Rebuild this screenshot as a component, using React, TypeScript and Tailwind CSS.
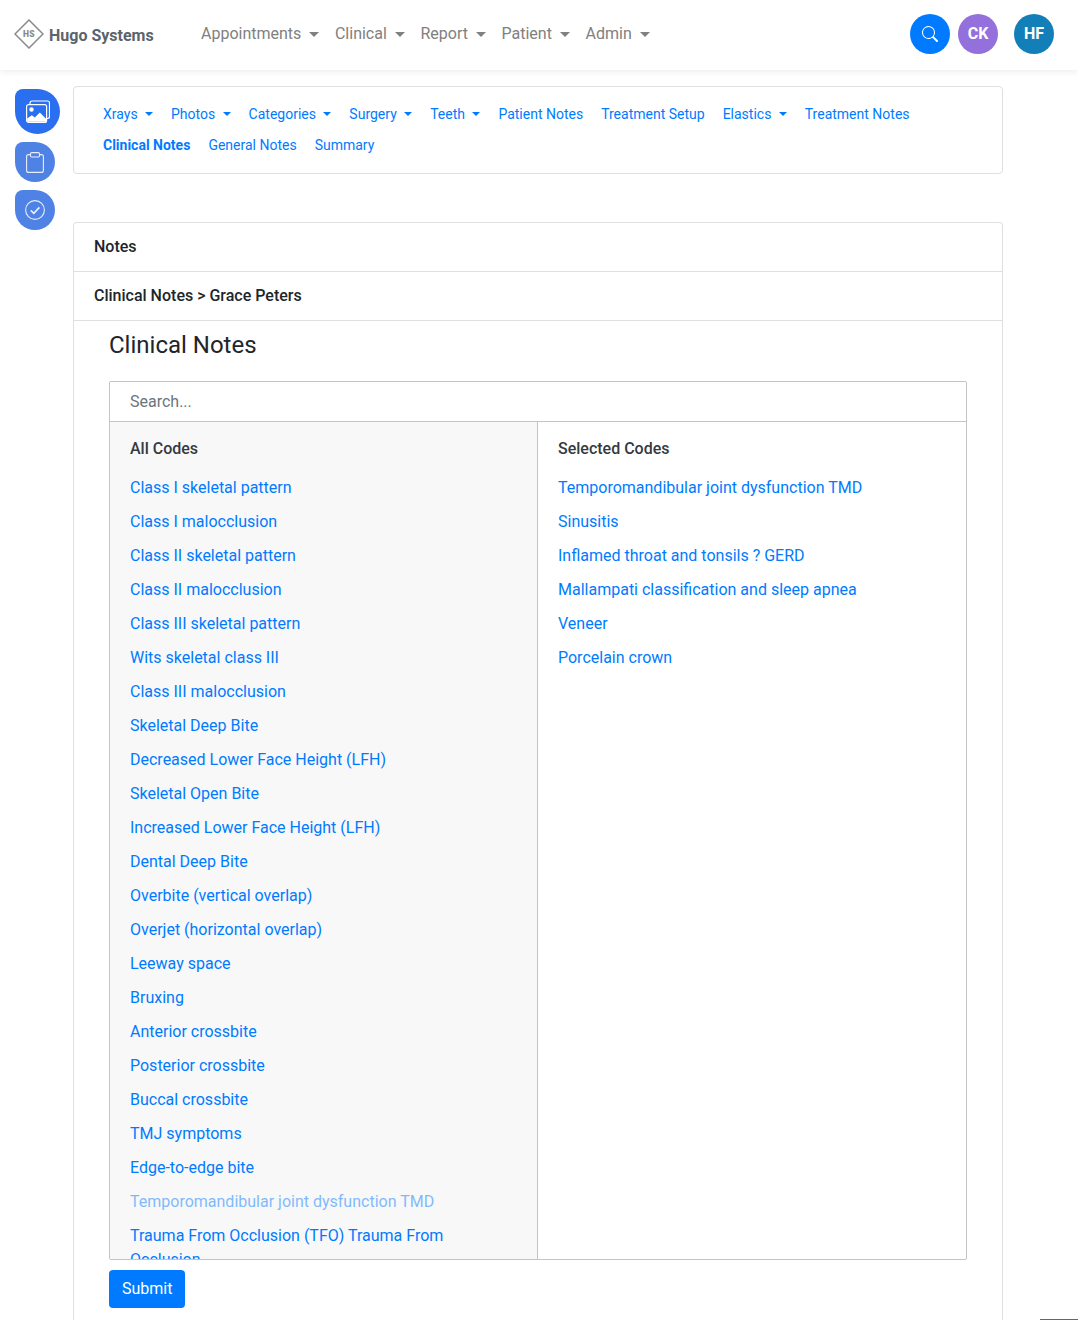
import { BsSearch } from "react-icons/bs";

const MENU = ["Appointments", "Clinical", "Report", "Patient", "Admin"];
const TABS_1 = [
  { label: "Xrays", caret: true },
  { label: "Photos", caret: true },
  { label: "Categories", caret: true },
  { label: "Surgery", caret: true },
  { label: "Teeth", caret: true },
  { label: "Patient Notes" },
  { label: "Treatment Setup" },
  { label: "Elastics", caret: true },
  { label: "Treatment Notes" },
];
const ALL_CODES = [
  "Class I skeletal pattern",
  "Class I malocclusion",
  "Class II skeletal pattern",
  "Class II malocclusion",
  "Class III skeletal pattern",
  "Wits skeletal class III",
  "Class III malocclusion",
  "Skeletal Deep Bite",
  "Decreased Lower Face Height (LFH)",
  "Skeletal Open Bite",
  "Increased Lower Face Height (LFH)",
  "Dental Deep Bite",
  "Overbite (vertical overlap)",
  "Overjet (horizontal overlap)",
  "Leeway space",
  "Bruxing",
  "Anterior crossbite",
  "Posterior crossbite",
  "Buccal crossbite",
  "TMJ symptoms",
  "Edge-to-edge bite",
];
const SELECTED = [
  "Temporomandibular joint dysfunction TMD",
  "Sinusitis",
  "Inflamed throat and tonsils ? GERD",
  "Mallampati classification and sleep apnea",
  "Veneer",
  "Porcelain crown",
];

function Logo() {
  return (
    <svg width="30" height="30" viewBox="0 0 30 30" className="shrink-0 -mt-[2px]">
      <path d="M15 1 29 15 15 29 1 15Z" fill="none" stroke="#8a8a8a" strokeWidth="1.5" />
      <text x="15" y="18" textAnchor="middle" fontSize="8.5" fontWeight="900" letterSpacing="0.4" fill="#8a8a8a" fontFamily="Roboto">HS</text>
    </svg>
  );
}

function PhotosIcon() {
  return (
    <svg width="24" height="23" viewBox="0 0 24 23" fill="none" stroke="white" strokeWidth="1.2">
      <rect x="0.6" y="4.6" width="20" height="17.8" rx="2" />
      <path d="M4 4.5V3a2 2 0 0 1 2-2h15.5a2 2 0 0 1 2 2v13.5a2 2 0 0 1-2 2h-1" />
      <circle cx="5.5" cy="9.5" r="2.2" fill="white" stroke="none" />
      <path d="M1.2 21.8v-3.3l4.6-3.2 3 2.2 5-5 6.2 6.3v3Z" fill="white" stroke="none" />
    </svg>
  );
}

function ClipboardIcon() {
  return (
    <svg width="18" height="21" viewBox="0 0 18 21" fill="none" stroke="#e8eefb" strokeWidth="1.1">
      <rect x="0.6" y="2.6" width="16.8" height="17.8" rx="2" />
      <rect x="4.5" y="0.6" width="9" height="4.4" rx="1.2" fill="#4e82e4" />
    </svg>
  );
}

function CheckIcon() {
  return (
    <svg width="20" height="20" viewBox="0 0 20 20" fill="none" stroke="#e8eefb">
      <circle cx="10" cy="10" r="9.4" strokeWidth="1.1" />
      <path d="M5.8 10.3l3 3 5.6-6" strokeWidth="1.7" />
    </svg>
  );
}

function Header() {
  return (
    <header className="h-[70px] flex items-center bg-white shadow-[0_2px_6px_rgba(0,0,0,0.07)] relative">
      <div className="flex items-center ml-[14px] w-[187px] gap-[5px]">
        <Logo />
        <span className="text-[16px] font-bold text-[#5c636b] mt-[2px]">Hugo Systems</span>
      </div>
      <nav className="flex items-center -mt-[2px]">
        {MENU.map((m) => (
          <span key={m} className="flex items-center gap-[8px] mr-[15.6px] text-[16px] text-[#808080]">
            {m}
            <span className="inline-block border-x-[5px] border-t-[5px] border-x-transparent border-t-[#808080]" />
          </span>
        ))}
      </nav>
      <div className="ml-auto flex items-center mr-[24px] -mt-[2px]">
        <span className="w-10 h-10 rounded-full bg-[#007bff] flex items-center justify-center text-white">
          <BsSearch size={16} />
        </span>
        <span className="w-10 h-10 ml-[8px] rounded-full bg-[#9370db] flex items-center justify-center text-white font-bold text-[16px]">CK</span>
        <span className="w-10 h-10 ml-[16px] rounded-full bg-[#137fb8] flex items-center justify-center text-white font-bold text-[16px]">HF</span>
      </div>
    </header>
  );
}

function Sidebar() {
  return (
    <aside className="w-[73px] pl-[15px] pt-[19px] flex flex-col items-start shrink-0">
      <span className="w-[45px] h-[45px] rounded-[50%] rounded-tl-[8px] bg-[#2a6fef] flex items-center justify-center">
        <PhotosIcon />
      </span>
      <span className="w-10 h-10 mt-2 rounded-[50%] rounded-tl-[8px] bg-[#4e82e4] flex items-center justify-center">
        <ClipboardIcon />
      </span>
      <span className="w-10 h-10 mt-2 rounded-[50%] rounded-tl-[8px] bg-[#4e82e4] flex items-center justify-center">
        <CheckIcon />
      </span>
    </aside>
  );
}

function Tabs() {
  return (
    <div className="mt-4 h-[88px] border border-[#dfdfdf] rounded-[4px] bg-white pl-[29px] pt-[12px] text-[14px] text-[#007bff]">
      <div className="flex items-center h-[31px]">
        {TABS_1.map((t) => (
          <span key={t.label} className="flex items-center gap-[7.4px] mr-[18px]">
            {t.label}
            {t.caret && <span className="inline-block border-x-[4px] border-t-[4px] border-x-transparent border-t-[#007bff] -mt-[2px]" />}
          </span>
        ))}
      </div>
      <div className="flex items-center h-[31px]">
        <span className="font-bold mr-[18px]">Clinical Notes</span>
        <span className="mr-[18px]">General Notes</span>
        <span>Summary</span>
      </div>
    </div>
  );
}

function CodeLink({ label, faded }: { label: string; faded?: boolean }) {
  return <div className={`h-[34px] leading-[24px] ${faded ? "text-[#007bff]/50" : "text-[#007bff]"}`}>{label}</div>;
}

function Notes() {
  return (
    <div className="mt-12 border border-[#dfdfdf] border-b-0 rounded-t-[4px] bg-white h-[1098px] overflow-hidden">
      <div className="h-[49px] border-b border-[#dfdfdf] pl-5 flex items-center font-medium text-[16px] text-[#212529]">Notes</div>
      <div className="h-[49px] border-b border-[#dfdfdf] pl-5 flex items-center font-medium text-[16px] text-[#212529]">Clinical Notes &gt; Grace Peters</div>
      <div className="px-[35px]">
        <h1 className="text-[24px] leading-[29px] text-[#212529] pt-[10px] pb-[21px] box-content">Clinical Notes</h1>
        <div className="h-[879px] border border-[#c4c4c4] rounded-[2px] flex flex-col overflow-hidden text-[16px]">
          <div className="h-[40px] border-b border-[#c4c4c4] pl-5 flex items-center text-[#6c757d] shrink-0">Search...</div>
          <div className="flex flex-1 min-h-0">
            <div className="w-[428px] bg-[#f8f8f8] border-r border-[#c4c4c4] pl-5 pr-[90px] pt-[15px] overflow-hidden">
              <div className="font-medium text-[#343a40] leading-[24px] mb-[15px]">All Codes</div>
              {ALL_CODES.map((c) => (
                <CodeLink key={c} label={c} />
              ))}
              <CodeLink label="Temporomandibular joint dysfunction TMD" faded />
              <div className="text-[#007bff] leading-[24px]">Trauma From Occlusion (TFO) Trauma From Occlusion</div>
            </div>
            <div className="flex-1 pl-5 pt-[15px]">
              <div className="font-medium text-[#343a40] leading-[24px] mb-[15px]">Selected Codes</div>
              {SELECTED.map((c) => (
                <CodeLink key={c} label={c} />
              ))}
            </div>
          </div>
        </div>
        <button className="mt-[10px] h-[38px] px-[13px] rounded-[4px] bg-[#007bff] text-white text-[16px]">Submit</button>
      </div>
    </div>
  );
}

export default function App() {
  return (
    <div className="h-[1320px] overflow-hidden bg-white relative font-['Roboto',sans-serif]">
      <Header />
      <div className="flex">
        <Sidebar />
        <main className="w-[930px]">
          <Tabs />
          <Notes />
        </main>
      </div>
      <div className="absolute right-0 bottom-0 w-[38px] h-px bg-[#666]" />
    </div>
  );
}
